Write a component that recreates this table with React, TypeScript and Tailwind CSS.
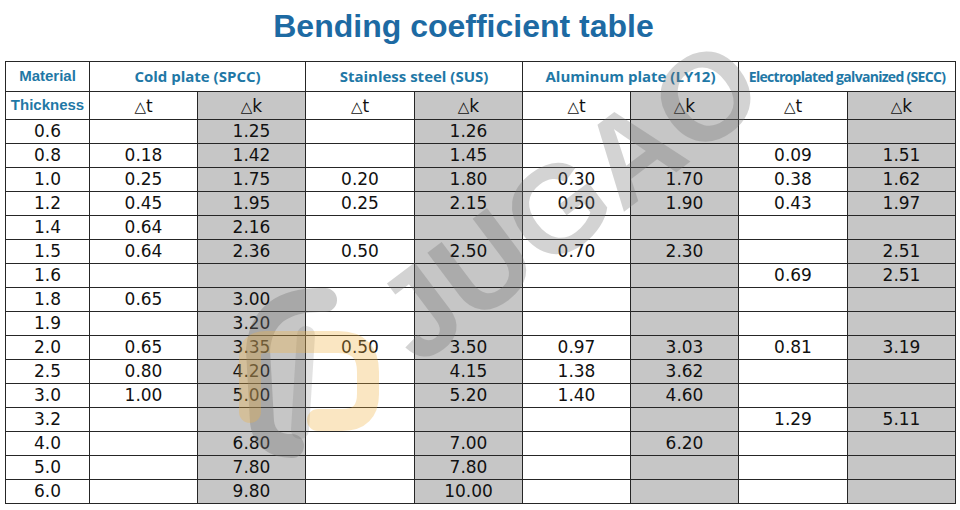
import React from "react";

type Row = [string, string, string, string, string, string, string, string, string];

const rows: Row[] = [
  ["0.6", "", "1.25", "", "1.26", "", "", "", ""],
  ["0.8", "0.18", "1.42", "", "1.45", "", "", "0.09", "1.51"],
  ["1.0", "0.25", "1.75", "0.20", "1.80", "0.30", "1.70", "0.38", "1.62"],
  ["1.2", "0.45", "1.95", "0.25", "2.15", "0.50", "1.90", "0.43", "1.97"],
  ["1.4", "0.64", "2.16", "", "", "", "", "", ""],
  ["1.5", "0.64", "2.36", "0.50", "2.50", "0.70", "2.30", "", "2.51"],
  ["1.6", "", "", "", "", "", "", "0.69", "2.51"],
  ["1.8", "0.65", "3.00", "", "", "", "", "", ""],
  ["1.9", "", "3.20", "", "", "", "", "", ""],
  ["2.0", "0.65", "3.35", "0.50", "3.50", "0.97", "3.03", "0.81", "3.19"],
  ["2.5", "0.80", "4.20", "", "4.15", "1.38", "3.62", "", ""],
  ["3.0", "1.00", "5.00", "", "5.20", "1.40", "4.60", "", ""],
  ["3.2", "", "", "", "", "", "", "1.29", "5.11"],
  ["4.0", "", "6.80", "", "7.00", "", "6.20", "", ""],
  ["5.0", "", "7.80", "", "7.80", "", "", "", ""],
  ["6.0", "", "9.80", "", "10.00", "", "", "", ""],
];

const groups = [
  { label: "Cold plate (SPCC)", cls: "text-[15px]" },
  { label: "Stainless steel (SUS)", cls: "text-[15px]" },
  { label: "Aluminum plate (LY12)", cls: "text-[15px]" },
  { label: "Electroplated galvanized (SECC)", cls: "text-[14px] tracking-[-0.7px]" },
];

const numFont = "[font-family:'DejaVu_Sans',sans-serif]";
const cellB = "border border-[#262626]";
const gray = "bg-[#c6c6c6]";

function Delta({ letter }: { letter: string }) {
  return (
    <span className={`${numFont} text-[#111] text-[17px] leading-none`}>
      <span className="text-[15px]">△</span>
      {letter}
    </span>
  );
}

export default function App() {
  return (
    <div className="relative w-[960px] h-[510px] bg-white overflow-hidden">
      <div className="h-[61px] pt-[10px] flex justify-center pr-[33px]">
        <h1 className="[font-family:'Liberation_Sans',Arial,sans-serif] font-bold text-[32px] leading-[32px] text-[#1d6aa3]">
          Bending coefficient table
        </h1>
      </div>
      <table className="ml-[5px] w-[950px] table-fixed border-collapse">
        <colgroup>
          <col className="w-[84px]" />
          <col className="w-[108px]" />
          <col className="w-[108px]" />
          <col className="w-[109px]" />
          <col className="w-[108px]" />
          <col className="w-[108px]" />
          <col className="w-[108px]" />
          <col className="w-[109px]" />
          <col className="w-[108px]" />
        </colgroup>
        <thead>
          <tr className="h-[30px]">
            <th className={`${cellB} p-0 text-center font-bold text-[15px] text-[#1f78a6] [font-family:'Liberation_Sans',Arial,sans-serif]`}>
              Material
            </th>
            {groups.map((g) => (
              <th
                key={g.label}
                colSpan={2}
                className={`${cellB} p-0 text-center font-bold text-[#1f78a6] whitespace-nowrap [font-family:'Open_Sans',sans-serif] ${g.cls}`}
              >
                {g.label}
              </th>
            ))}
          </tr>
          <tr className="h-[28px]">
            <th className={`${cellB} p-0 text-center font-bold text-[15px] text-[#1f78a6] [font-family:'Liberation_Sans',Arial,sans-serif]`}>
              Thickness
            </th>
            {groups.map((g) => (
              <React.Fragment key={g.label}>
                <th className={`${cellB} p-0 text-center font-normal`}>
                  <Delta letter="t" />
                </th>
                <th className={`${cellB} ${gray} p-0 text-center font-normal`}>
                  <Delta letter="k" />
                </th>
              </React.Fragment>
            ))}
          </tr>
        </thead>
        <tbody>
          {rows.map((r) => (
            <tr key={r[0]} className="h-[24px]">
              {r.map((v, i) => (
                <td
                  key={i}
                  className={`${cellB} p-0 text-center text-[17px] leading-none text-[#111] ${numFont} ${
                    i > 0 && i % 2 === 0 ? gray : ""
                  }`}
                >
                  {v}
                </td>
              ))}
            </tr>
          ))}
        </tbody>
      </table>

      {/* watermark logo */}
      <svg
        className="absolute left-0 top-0 pointer-events-none"
        width="960"
        height="510"
        viewBox="0 0 960 510"
      >
        <path
          d="M325 300 Q262 298 258 350 L262 422 Q265 446 292 446"
          fill="none"
          stroke="#707070"
          strokeOpacity="0.35"
          strokeWidth="24"
          strokeLinecap="round"
        />
        <path
          d="M306 335 L300 430"
          fill="none"
          stroke="#707070"
          strokeOpacity="0.2"
          strokeWidth="18"
          strokeLinecap="round"
        />
        <path
          d="M250 412 L250 356 Q250 342 266 342 L338 342 Q368 342 368 372 L368 394 Q368 420 342 420 L318 420"
          fill="none"
          stroke="#f0b040"
          strokeOpacity="0.32"
          strokeWidth="22"
          strokeLinecap="round"
        />
      </svg>
      <div className="absolute left-[568px] top-[200px] -translate-x-1/2 -translate-y-1/2 -rotate-37 pointer-events-none opacity-30">
        <span className="[font-family:'Liberation_Sans',Arial,sans-serif] font-bold text-[124px] leading-none text-[#707070] whitespace-nowrap">
          JUGAO
        </span>
      </div>
    </div>
  );
}
